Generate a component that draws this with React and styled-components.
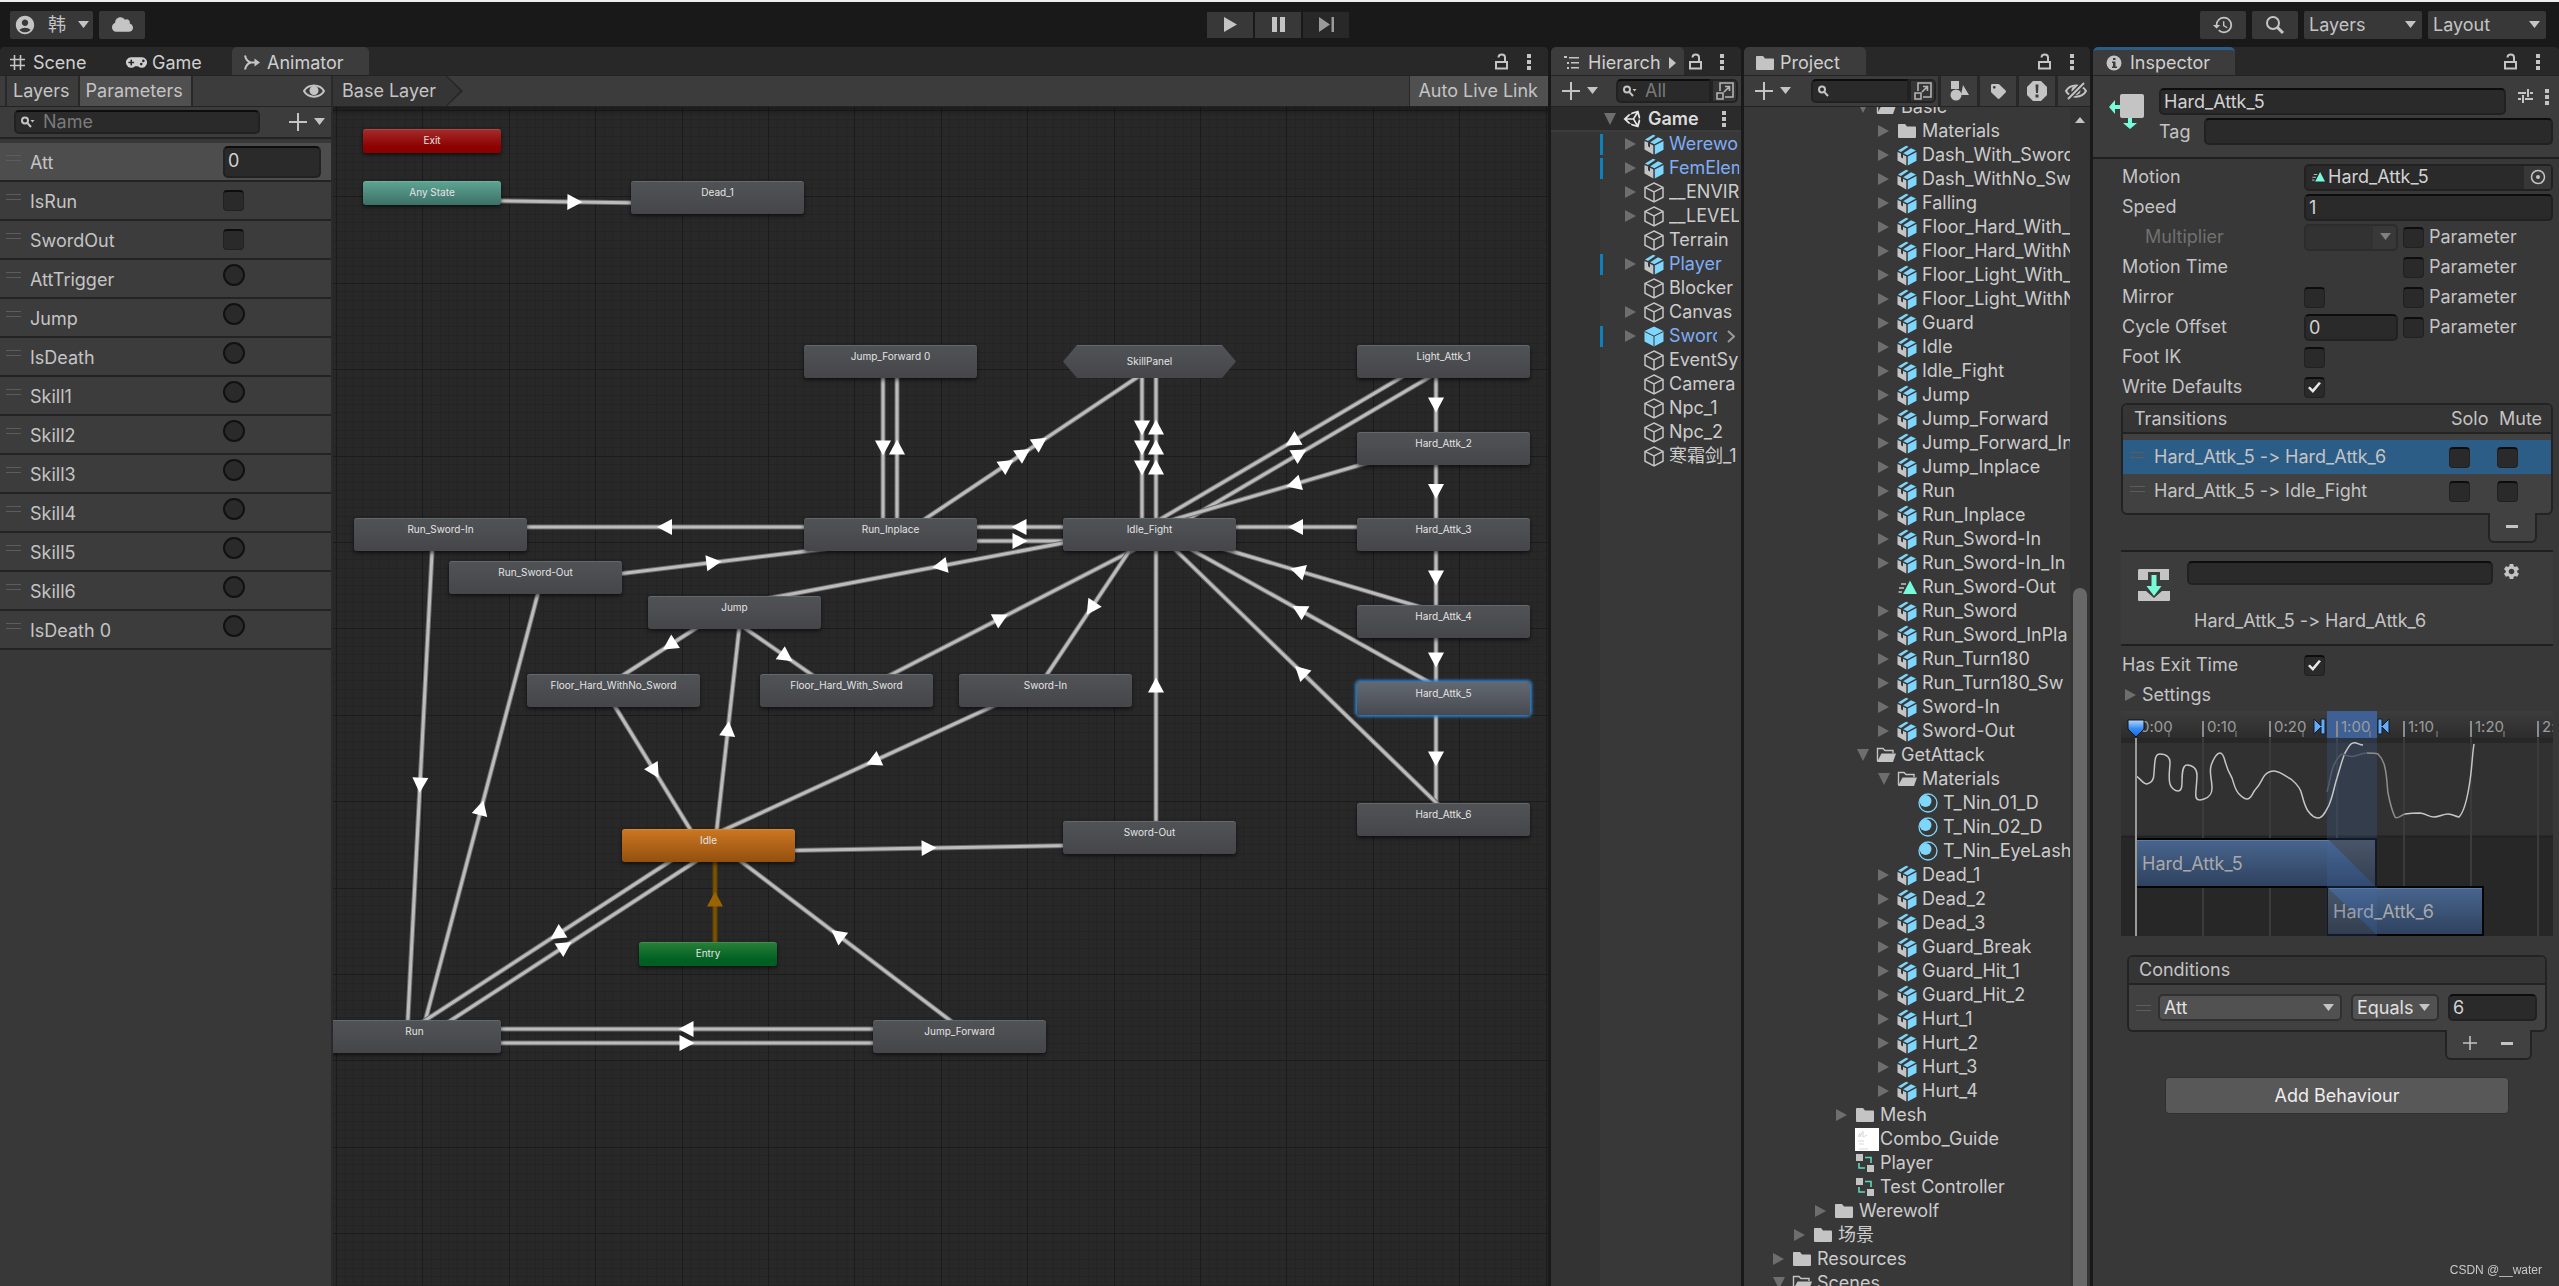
import React from 'react';
import styled, { createGlobalStyle, css } from 'styled-components';
import { FaCloud, FaGamepad, FaTag, FaUnity } from 'react-icons/fa';
import { MdAccountCircle, MdHistory, MdSettings } from 'react-icons/md';

const GlobalStyle = createGlobalStyle`
  * {
    box-sizing: border-box;
  }
  body {
    margin: 0;
    background: #191919;
    overflow: hidden;
  }
  body, button, input, select, table {
    font-family: Inter, 'Noto Sans CJK SC', sans-serif;
    font-size: 18px;
    font-feature-settings: 'calt' 0;
    line-height: 24px;
    color: #c4c4c4;
  }
  button {
    padding: 0;
    border: 0;
    background: none;
  }
  svg {
    display: block;
    flex: none;
  }
`;

/* ---------- layout ---------- */

const Editor = styled.div`
  display: flex;
  flex-direction: column;
  height: 100vh;
  border-top: 2px solid #eceff1;
`;

const TopBar = styled.header`
  display: grid;
  grid-template-columns: 1fr auto 1fr;
  align-items: center;
  height: 45px;
  padding: 0 13px 0 10px;
`;

const TopGroup = styled.div`
  display: flex;
  gap: 6px;
  justify-content: ${(p) => (p.$end ? 'flex-end' : 'flex-start')};
`;

const PlayGroup = styled.div`
  display: flex;
  gap: 2px;
`;

const TopButton = styled.button`
  display: flex;
  align-items: center;
  justify-content: center;
  gap: 12px;
  width: ${(p) => p.$w || 46}px;
  height: 28px;
  border-radius: 2px;
  background: #383838;
`;

const PlayButton = styled(TopButton)`
  height: 26px;
  border-radius: 0;
  ${(p) => p.disabled && 'background: #282828; color: #9a9a9a;'}
`;

const Workspace = styled.main`
  flex: 1;
  min-height: 0;
  display: grid;
  grid-template-columns: minmax(0, 1fr) 190px 346px 466px;
  gap: 3px;
`;

const Panel = styled.section`
  display: flex;
  flex-direction: column;
  min-width: 0;
  min-height: 0;
  overflow: hidden;
  border-radius: 5px 5px 0 0;
  background: #383838;
`;

const TabStrip = styled.div`
  display: flex;
  flex: none;
  height: 29px;
  background: #282828;
  border-bottom: 1px solid #232323;
`;

const Tab = styled.button`
  display: flex;
  align-items: center;
  gap: ${(p) => p.$gap || 7}px;
  width: ${(p) => p.$w}px;
  padding: 3px 0 0 ${(p) => p.$pad}px;
  overflow: hidden;
  white-space: nowrap;
  border-radius: 5px 5px 0 0;
  color: #cfcfcf;
  ${(p) => p.$active && 'background: #3c3c3c;'}
  ${(p) => p.$focus && 'border-top: 3px solid #2c5d87; padding-top: 0;'}
`;

const TabName = styled.span`
  width: ${(p) => (p.$clip ? '73px' : 'auto')};
  overflow: hidden;
`;

const TabTools = styled.div`
  display: flex;
  align-items: center;
  gap: ${(p) => p.$gap || 19}px;
  margin-left: auto;
  padding-right: ${(p) => p.$end}px;
`;

const Toolbar = styled.div`
  display: flex;
  flex: none;
  align-items: center;
  height: 31px;
  background: #3c3c3c;
  border-bottom: 1px solid #232323;
`;

/* ---------- controls ---------- */

const field = css`
  background: #2a2a2a;
  border: 2px solid #212121;
  border-top-color: #0d0d0d;
  border-radius: 5px;
`;

const TextInput = styled.input`
  ${field}
  width: 100%;
  flex: 1;
  min-width: 0;
  height: ${(p) => p.$h || 27}px;
  padding: 0 3px;
  color: #d2d2d2;
  outline: none;
`;

const CheckBox = styled.input.attrs({ type: 'checkbox' })`
  appearance: none;
  display: grid;
  place-items: center;
  flex: none;
  width: 21px;
  height: 21px;
  margin: 0;
  background: #2a2a2a;
  border: 1px solid #212121;
  border-top: 2px solid #0d0d0d;
  border-radius: 4px;
  &:checked::before {
    content: '';
    width: 13px;
    height: 11px;
    background: #e8e8e8;
    clip-path: polygon(0 55%, 14% 42%, 36% 66%, 84% 0, 100% 12%, 38% 100%);
  }
`;

const Trigger = styled.input.attrs({ type: 'radio' })`
  appearance: none;
  width: 22px;
  height: 22px;
  margin: 0;
  background: #2a2a2a;
  border: 2px solid #111;
  border-radius: 50%;
`;

const SelectWrap = styled.span`
  display: grid;
  align-items: center;
  flex: none;
  width: ${(p) => p.$w}px;
  svg {
    grid-area: 1 / 1;
    justify-self: end;
    margin-right: ${(p) => p.$arrow || 6}px;
    pointer-events: none;
  }
`;

const Select = styled.select`
  appearance: none;
  grid-area: 1 / 1;
  width: 100%;
  height: 27px;
  padding: 0 4px;
  background: #515151;
  border: 2px solid #303030;
  border-radius: 5px;
  color: #e0e0e0;
  outline: none;
  &:disabled {
    background: linear-gradient(90deg, #323232 75%, #383838 75%);
    border-color: #2c2c2c;
    opacity: 1;
  }
`;

const TopSelect = styled(Select)`
  height: 28px;
  padding: 0 5px;
  background: #383838;
  border: 0;
  border-radius: 2px;
  color: #c4c4c4;
`;

const SearchBox = styled.label`
  ${field}
  display: flex;
  align-items: center;
  flex: ${(p) => (p.$w ? 'none' : '1')};
  width: ${(p) => p.$w}px;
  min-width: 0;
  height: 24px;
  padding-left: 5px;
  gap: 8px;
  ${(p) => p.$joined && 'border-radius: 5px 0 0 5px;'}
  input {
    width: 100%;
    min-width: 0;
    padding: 0;
    border: 0;
    background: none;
    outline: none;
  }
  input::placeholder {
    color: #7a7a7a;
  }
`;

const PickerButton = styled.button`
  display: grid;
  place-items: center;
  flex: none;
  width: 27px;
  height: 24px;
  border: 2px solid #222;
  border-radius: 0 5px 5px 0;
  background: #353535;
`;

const AddButton = styled.button`
  display: flex;
  flex: none;
  align-items: center;
  gap: 7px;
`;

/* ---------- icons ---------- */

const Down = ({ color = '#c4c4c4', size = 11 }) => (
  <svg width={size} height='8' viewBox='0 0 11 8' fill={color}>
    <path d='M0 0h11L5.5 7z' />
  </svg>
);

const Lock = () => (
  <svg width='13' height='17' viewBox='0 0 13 17' fill='none' stroke='#c4c4c4' strokeWidth='2'>
    <path d='M1 9h11v6.5H1z' />
    <path d='M3.5 4.5C3.5 0.5 10 0.5 10 4.5V9' />
  </svg>
);

const Dots = () => (
  <svg width='4' height='17' viewBox='0 0 4 17' fill='#c4c4c4'>
    <path d='M0 1h4v4H0zM0 7h4v4H0zM0 13h4v4H0z' />
  </svg>
);

const Plus = ({ size = 18 }) => (
  <svg width={size} height={size} viewBox='0 0 18 18' stroke='#c4c4c4' strokeWidth='2'>
    <path d='M9 0v18M0 9h18' />
  </svg>
);

const Minus = () => (
  <svg width='12' height='3' viewBox='0 0 12 3' fill='#c4c4c4'>
    <path d='M0 0h12v3H0z' />
  </svg>
);

const Lens = ({ menu }) => (
  <svg width='14' height='12' viewBox='0 0 14 12' fill='none' stroke='#c4c4c4' strokeWidth='2'>
    <circle cx='4' cy='4.5' r='3' />
    <path d='M6.2 6.8L10 11' />
    {menu && <path d='M9.5 4h4l-2 2.4z' fill='#c4c4c4' stroke='none' />}
  </svg>
);

const BigLens = () => (
  <svg width='20' height='20' viewBox='0 0 20 20' fill='none' stroke='#c4c4c4'>
    <circle cx='8' cy='8' r='6' strokeWidth='2' />
    <path d='M12.5 12.5L18 18' strokeWidth='3' />
  </svg>
);

const Picker = () => (
  <svg width='18' height='18' viewBox='0 0 18 18' fill='none' stroke='#b4b4b4' strokeWidth='1.6'>
    <path d='M4 9V1h13v14H9' />
    <path d='M1 11h6v6H1zM8 10l5-5M9 4.5h4.5V9' />
  </svg>
);

const GridIcon = () => (
  <svg width='17' height='17' viewBox='0 0 17 17' stroke='#c4c4c4' strokeWidth='1.6'>
    <path d='M5.5 1v15M11.5 1v15M1 5.5h15M1 11.5h15' />
  </svg>
);

const AnimatorIcon = () => (
  <svg width='16' height='17' viewBox='0 0 16 17' fill='none' stroke='#c4c4c4' strokeWidth='2'>
    <path d='M1 1.500c1 4.500 3 6.500 6 7h4M1 15.500c1-4 3-6.500 6-7' />
    <path d='M10.500 4.500l5.500 4-5.500 4z' fill='#c4c4c4' stroke='none' />
  </svg>
);

const HierarchyIcon = () => (
  <svg width='16' height='14' viewBox='0 0 16 14' fill='#c4c4c4'>
    <path d='M0 0h3v2H0zM5 1h10v1.600H5zM3 6h2v2H3zM7 6h8v1.600H7zM3 11h2v2H3zM7 11h8v1.600H7z' />
  </svg>
);

const Folder = () => (
  <svg width='20' height='16' viewBox='0 0 20 16' fill='#c4c4c4'>
    <path d='M1 1.500Q1 1 2 1h6l2 2.500h8q1 0 1 1V14q0 1-1 1H2q-1 0-1-1z' />
  </svg>
);

const FolderOpen = () => (
  <svg width='20' height='16' viewBox='0 0 20 16'>
    <path d='M1.500 14V1.500H7l2 2h8V6' fill='none' stroke='#c4c4c4' strokeWidth='1.400' />
    <path d='M5.500 6.500H20L17 15H1z' fill='#c4c4c4' />
  </svg>
);

const ModelIcon = () => (
  <svg width='20' height='21' viewBox='0 0 20 21'>
    <path d='M1 5.400L9 .8l2.600 1L4 6.900zM6.200 8.200L14 3.200l5 2.200-8.600 4.800z' fill='#7fd6fd' />
    <path d='M.5 7L4 8.600v3.600l2 1.200V9.700l3.300 1.700v9L.5 15.600z' fill='#c4c4c4' />
    <path d='M10.800 11.400L19.500 7v8.800l-8.700 4.600z' fill='#7fd6fd' />
  </svg>
);

const CubeIcon = () => (
  <svg width='20' height='21' viewBox='0 0 20 21' fill='none' stroke='#c4c4c4' strokeWidth='1.500'>
    <path d='M10 1l9 4.400v9.800L10 20l-9-4.800V5.400zM1 5.400l9 4.600 9-4.600M10 10v10' />
  </svg>
);

const PrefabIcon = () => (
  <svg width='20' height='21' viewBox='0 0 20 21'>
    <path d='M10 .5l9.500 4.600v10.400L10 20.500.5 15.500V5.100z' fill='#7fd6fd' />
    <path d='M.5 5.400l9.500 4.800 9.500-4.800M10 10.200v10.300' fill='none' stroke='#383838' />
  </svg>
);

const ClipIcon = ({ size = 20 }) => (
  <svg width={size} height={size * 0.8} viewBox='0 0 20 16'>
    <path d='M13 1.500L20 15H6z' fill='#77fbd9' />
    <path d='M4 5h5M2 9h5M1.500 13H5' stroke='#c4c4c4' strokeWidth='1.300' />
  </svg>
);

const MaterialIcon = () => (
  <svg width='20' height='20' viewBox='0 0 20 20'>
    <circle cx='10' cy='10' r='9' fill='none' stroke='#7fd6fd' strokeWidth='1.300' />
    <circle cx='7.500' cy='8' r='6' fill='#7fd6fd' />
  </svg>
);

const TextureIcon = () => (
  <svg width='24' height='23' viewBox='0 0 24 23'>
    <path d='M0 0h24v23H0z' fill='#fff' />
    <path d='M3 9l2-4v4l3-6v6l4-2M3 13h6M4 16h5M4 21h9' fill='none' stroke='#d5d8da' />
  </svg>
);

const ControllerIcon = () => (
  <svg width='20' height='18' viewBox='0 0 20 18'>
    <path d='M1 0h7v7H1zM12 11h7v7h-7z' fill='#c4c4c4' />
    <path d='M10 3.500h6V9M4 9v5h6' fill='none' stroke='#5ed8bb' strokeWidth='1.600' />
  </svg>
);

const EyeIcon = ({ off }) => (
  <svg width='22' height='18' viewBox='0 0 22 18' fill='none' stroke='#c4c4c4' strokeWidth='2'>
    <path d='M1 9C5 1.500 17 1.500 21 9 17 16.500 5 16.500 1 9z' />
    <circle cx='11' cy='8.500' r='4.500' fill='#c4c4c4' stroke='none' />
    {off && <path d='M3 17L19 1' stroke='#3c3c3c' strokeWidth='5' />}
    {off && <path d='M3 17L19 1' />}
  </svg>
);

const InfoIcon = () => (
  <svg width='16' height='16' viewBox='0 0 16 16'>
    <circle cx='8' cy='8' r='7.500' fill='#c4c4c4' />
    <path d='M7 3h2.500v2H7zM6 6.500h3.500v5H11V13H6v-1.500h1V8H6z' fill='#3c3c3c' />
  </svg>
);

const ShapesIcon = () => (
  <svg width='20' height='20' viewBox='0 0 20 20' fill='#c4c4c4'>
    <path d='M2 0h8v8H2zM14 4l6 10h-8z' />
    <circle cx='7' cy='14' r='5.500' />
  </svg>
);

const AlertIcon = () => (
  <svg width='20' height='20' viewBox='0 0 20 20'>
    <path d='M6 0h8l6 6v8l-6 6H6l-6-6V6z' fill='#c4c4c4' />
    <path d='M8.500 3.500h3L11 12H9zM8.500 13.500h3v3h-3z' fill='#3c3c3c' />
  </svg>
);

const PresetIcon = () => (
  <svg width='15' height='16' viewBox='0 0 15 16' stroke='#c4c4c4' strokeWidth='2'>
    <path d='M0 5h8M12 5h3M10 1v8M0 11h3M7 11h8M5 7v8' />
  </svg>
);

const StateIcon = () => (
  <svg width='36' height='36' viewBox='0 0 36 36'>
    <rect x='11' y='1' width='24' height='24' rx='2' fill='#c4c4c4' />
    <path d='M0 14l6-7v5h5v4H6v5zM19 25h4v5h5l-7 6-7-6h5z' fill='#77fbd9' />
  </svg>
);

const TransitionIcon = () => (
  <svg width='32' height='32' viewBox='0 0 32 32'>
    <path d='M1 0h30v11H22V3H10v8H0V1zM0 22h8l8 7 8-7h8v9q0 1-1 1H1q-1 0-1-1z' fill='#c4c4c4' />
    <path d='M13.500 6h5v11h5L16 27 8.500 17h5z' fill='#77fbd9' />
  </svg>
);

const TargetIcon = () => (
  <svg width='16' height='16' viewBox='0 0 16 16'>
    <circle cx='8' cy='8' r='6.500' fill='none' stroke='#c4c4c4' strokeWidth='1.500' />
    <circle cx='8' cy='8' r='2' fill='#c4c4c4' />
  </svg>
);

/* ---------- animator: parameters ---------- */

const params = [
  ['Att', 'int'],
  ['IsRun', 'bool'],
  ['SwordOut', 'bool'],
  ['AttTrigger', 'trigger'],
  ['Jump', 'trigger'],
  ['IsDeath', 'trigger'],
  ['Skill1', 'trigger'],
  ['Skill2', 'trigger'],
  ['Skill3', 'trigger'],
  ['Skill4', 'trigger'],
  ['Skill5', 'trigger'],
  ['Skill6', 'trigger'],
  ['IsDeath 0', 'trigger'],
];

const AnimatorBody = styled.div`
  display: grid;
  grid-template-columns: 333px minmax(0, 1fr);
  flex: 1;
  min-height: 0;
`;

const Side = styled.div`
  display: flex;
  flex-direction: column;
  border-right: 2px solid #2a2a2a;
`;

const ModeButton = styled.button`
  height: 30px;
  padding: 0 8px 0 6px;
  border-right: 2px solid #282828;
  ${(p) => p.$active && 'background: #505050;'}
`;

const ModeBar = styled(Toolbar)`
  padding: 0 6px 0 5px;
  > svg {
    margin-left: auto;
  }
  ${ModeButton}:first-child {
    border-left: 2px solid #282828;
  }
`;

const SearchRow = styled.div`
  display: flex;
  align-items: center;
  gap: 29px;
  height: 32px;
  padding: 0 6px 0 14px;
  background: #3c3c3c;
  border-bottom: 2px solid #232323;
`;

const ParamList = styled.ul`
  margin: 0;
  padding: 4px 0 0;
  list-style: none;
  background: #383838;
`;

const ParamRow = styled.li`
  display: grid;
  grid-template-columns: 24px 193px 98px;
  height: 39px;
  padding: 0 6px;
  border-bottom: 2px solid #232323;
  background: ${(p) => (p.$active ? '#4d4d4d' : '#3c3c3c')};
  label {
    padding-top: 8px;
  }
`;

const ParamValue = styled.div`
  padding-top: ${(p) => (p.$kind === 'int' ? 3 : p.$kind === 'bool' ? 8 : 4)}px;
  input {
    display: block;
  }
`;

const ParamInput = styled(TextInput)`
  height: 32px;
  padding-bottom: 4px;
`;

const Handle = styled.span`
  width: 15px;
  height: 6px;
  margin-top: ${(p) => p.$top || 0}px;
  border: solid #5c5c5c;
  border-width: 1px 0;
`;

/* ---------- animator: graph ---------- */

// Node origin is the top left corner of the graph view.
const nodes = {
  exit: { label: 'Exit', x: 30, y: 22, kind: 'exit' },
  any: { label: 'Any State', x: 30, y: 74, kind: 'any' },
  dead: { label: 'Dead_1', x: 298, y: 74 },
  jumpFwd0: { label: 'Jump_Forward 0', x: 471, y: 238 },
  skill: { label: 'SkillPanel', x: 730, y: 238, kind: 'machine' },
  light1: { label: 'Light_Attk_1', x: 1024, y: 238 },
  hard2: { label: 'Hard_Attk_2', x: 1024, y: 325 },
  hard3: { label: 'Hard_Attk_3', x: 1024, y: 411 },
  hard4: { label: 'Hard_Attk_4', x: 1024, y: 498 },
  hard5: { label: 'Hard_Attk_5', x: 1024, y: 575, kind: 'selected' },
  hard6: { label: 'Hard_Attk_6', x: 1024, y: 696 },
  runIn: { label: 'Run_Sword-In', x: 21, y: 411 },
  runOut: { label: 'Run_Sword-Out', x: 116, y: 454 },
  runPlace: { label: 'Run_Inplace', x: 471, y: 411 },
  fight: { label: 'Idle_Fight', x: 730, y: 411 },
  jump: { label: 'Jump', x: 315, y: 489 },
  floorNo: { label: 'Floor_Hard_WithNo_Sword', x: 194, y: 567 },
  floorWith: { label: 'Floor_Hard_With_Sword', x: 427, y: 567 },
  swordIn: { label: 'Sword-In', x: 626, y: 567 },
  swordOut: { label: 'Sword-Out', x: 730, y: 714 },
  idle: { label: 'Idle', x: 289, y: 722, kind: 'idle' },
  entry: { label: 'Entry', x: 306, y: 835, kind: 'entry' },
  run: { label: 'Run', x: -5, y: 913 },
  jumpFwd: { label: 'Jump_Forward', x: 540, y: 913 },
};

const edges = [
  ['any', 'dead'],
  ['jumpFwd0', 'runPlace'],
  ['runPlace', 'jumpFwd0'],
  ['runPlace', 'skill', 3],
  ['skill', 'fight', 3],
  ['fight', 'skill', 3],
  ['light1', 'fight'],
  ['fight', 'light1'],
  ['light1', 'hard2'],
  ['hard2', 'hard3'],
  ['hard3', 'hard4'],
  ['hard4', 'hard5'],
  ['hard5', 'hard6'],
  ['hard2', 'fight'],
  ['hard3', 'fight'],
  ['hard4', 'fight'],
  ['hard5', 'fight'],
  ['hard6', 'fight'],
  ['fight', 'runPlace'],
  ['runPlace', 'fight'],
  ['runPlace', 'runIn'],
  ['runOut', 'runPlace'],
  ['runIn', 'run'],
  ['run', 'runOut'],
  ['fight', 'jump'],
  ['jump', 'floorNo'],
  ['jump', 'floorWith'],
  ['floorWith', 'fight'],
  ['fight', 'swordIn'],
  ['swordIn', 'idle'],
  ['swordOut', 'fight'],
  ['floorNo', 'idle'],
  ['idle', 'jump'],
  ['idle', 'swordOut'],
  ['idle', 'run'],
  ['run', 'idle'],
  ['run', 'jumpFwd'],
  ['jumpFwd', 'run'],
  ['jumpFwd', 'idle'],
  ['entry', 'idle'],
];

const small = ['exit', 'any', 'entry'];
const center = (n) => {
  const isSmall = small.includes(n.kind);
  return [n.x + (isSmall ? 69 : 86), n.y + (isSmall ? 12 : 16)];
};

const fills = {
  exit: 'linear-gradient(#a52c2c, #8c0000 75%)',
  any: 'linear-gradient(#5ea593, #3c7067)',
  idle: 'linear-gradient(#cc7722, #94500e)',
  entry: 'linear-gradient(#298038, #005f22 75%)',
  selected: 'linear-gradient(#636872, #484a50)',
};

const Graph = styled.div`
  position: relative;
  flex: 1;
  overflow: hidden;
  background: #282828;
  > svg {
    position: absolute;
    inset: 0;
  }
`;

const Node = styled.div`
  position: absolute;
  left: ${(p) => p.$x}px;
  top: ${(p) => p.$y}px;
  width: ${(p) => (small.includes(p.$kind) ? 138 : 173)}px;
  height: ${(p) => (small.includes(p.$kind) ? 24 : 33)}px;
  border-radius: 3px;
  background: ${(p) => fills[p.$kind] || 'linear-gradient(#505356, #46464a)'};
  box-shadow: ${(p) =>
    p.$kind === 'selected'
      ? '0 0 3px 2px #2f7fc8'
      : '0 2px 4px rgba(0, 0, 0, 0.6), inset 0 1px rgba(255, 255, 255, 0.12)'};
  text-align: center;
  font-size: 10px;
  line-height: ${(p) => (p.$kind === 'machine' ? 33 : 23)}px;
  color: #e4e4e4;
  ${(p) =>
    p.$kind === 'machine' &&
    'clip-path: polygon(14px 0, calc(100% - 14px) 0, 100% 50%, calc(100% - 14px) 100%, 14px 100%, 0 50%);'}
`;

const GraphSide = styled.div`
  display: flex;
  flex-direction: column;
  min-width: 0;
`;

const Crumb = styled.button`
  display: flex;
  align-items: center;
  height: 30px;
  padding-left: 9px;
  background: #353535;
  clip-path: polygon(0 0, calc(100% - 16px) 0, 100% 50%, calc(100% - 16px) 100%, 0 100%);
  span {
    padding-right: 10px;
  }
`;

const LiveLink = styled.button`
  height: 30px;
  margin-left: auto;
  padding: 0 10px 0 8px;
  border-left: 1px solid #282828;
  background: #505050;
`;

const TILE = 432;

function GraphGrid() {
  const path = (count) => {
    let d = '';
    for (let i = 0; i < count; i++) {
      const at = Math.round((i * TILE) / count);
      d += `M${at} 0h1v${TILE}h-1zM0 ${at}h${TILE}v1H0z`;
    }
    return d;
  };
  return (
    <pattern id='grid' x='3' y='3' width={TILE} height={TILE} patternUnits='userSpaceOnUse'>
      <path d={path(50)} fill='#242424' />
      <path d={path(5)} fill='#1b1b1b' />
    </pattern>
  );
}

function Edge({ from, to, arrows = 1 }) {
  const [ax, ay] = center(nodes[from]);
  const [bx, by] = center(nodes[to]);
  const len = Math.hypot(bx - ax, by - ay);
  const dx = (bx - ax) / len;
  const dy = (by - ay) / len;
  // each direction runs on its own side of the centre line
  const ox = -dy * 7;
  const oy = dx * 7;
  const angle = (Math.atan2(dy, dx) * 180) / Math.PI;
  const entry = from === 'entry';
  const steps = arrows === 3 ? [-20, 0, 20] : [0];
  const d = `M${ax + ox} ${ay + oy}L${bx + ox} ${by + oy}`;
  return (
    <g>
      <path d={d} stroke={entry ? '#5e4208' : '#6c6c6c'} strokeWidth='5' />
      <path d={d} stroke={entry ? '#7a5200' : '#bcbcbc'} strokeWidth='3' />
      {steps.map((s) => (
        <path
          key={s}
          d='M-7 -8L8 0L-7 8z'
          fill={entry ? '#996300' : '#fff'}
          transform={`translate(${(ax + bx) / 2 + ox + dx * s} ${(ay + by) / 2 + oy + dy * s}) rotate(${angle})`}
        />
      ))}
    </g>
  );
}

function Animator() {
  return (
    <Panel>
      <TabStrip>
        <Tab $w={117} $pad={9}>
          <GridIcon />
          Scene
        </Tab>
        <Tab $w={115} $pad={9} $gap={5}>
          <FaGamepad size={21} />
          Game
        </Tab>
        <Tab $w={137} $pad={12} $active>
          <AnimatorIcon />
          Animator
        </Tab>
        <TabTools $end={17}>
          <Lock />
          <Dots />
        </TabTools>
      </TabStrip>
      <AnimatorBody>
        <Side>
          <ModeBar>
            <ModeButton>Layers</ModeButton>
            <ModeButton $active>Parameters</ModeButton>
            <EyeIcon />
          </ModeBar>
          <SearchRow>
            <SearchBox>
              <Lens menu />
              <input aria-label='Name' placeholder='Name' />
            </SearchBox>
            <AddButton aria-label='Add parameter'>
              <Plus />
              <Down />
            </AddButton>
          </SearchRow>
          <ParamList>
            {params.map(([name, kind], i) => (
              <ParamRow key={name} $active={i === 0}>
                <Handle $top={12} />
                <label htmlFor={`param-${i}`}>{name}</label>
                <ParamValue $kind={kind}>
                  {kind === 'int' && <ParamInput id={`param-${i}`} defaultValue='0' />}
                  {kind === 'bool' && <CheckBox id={`param-${i}`} />}
                  {kind === 'trigger' && <Trigger id={`param-${i}`} />}
                </ParamValue>
              </ParamRow>
            ))}
          </ParamList>
        </Side>
        <GraphSide>
          <Toolbar>
            <Crumb>
              <span>Base Layer</span>
              <svg width='17' height='30' viewBox='0 0 17 30' fill='none' stroke='#262626' strokeWidth='2'>
                <path d='M0 -1L16 15L0 31' />
              </svg>
            </Crumb>
            <LiveLink>Auto Live Link</LiveLink>
          </Toolbar>
          <Graph>
            <svg width='100%' height='100%'>
              <defs>
                <GraphGrid />
                <linearGradient id='top-shade' x2='0' y2='1'>
                  <stop stopColor='#000' stopOpacity='.3' />
                  <stop offset='1' stopColor='#000' stopOpacity='0' />
                </linearGradient>
              </defs>
              <rect width='100%' height='100%' fill='url(#grid)' />
              <rect width='100%' height='9' fill='url(#top-shade)' />
              {edges.map(([from, to, arrows]) => (
                <Edge key={from + to} from={from} to={to} arrows={arrows} />
              ))}
            </svg>
            {Object.entries(nodes).map(([id, n]) => (
              <Node key={id} $x={n.x} $y={n.y} $kind={n.kind}>
                {n.label}
              </Node>
            ))}
          </Graph>
        </GraphSide>
      </AnimatorBody>
    </Panel>
  );
}

/* ---------- trees ---------- */

const icons = {
  model: <ModelIcon />,
  cube: <CubeIcon />,
  prefab: <PrefabIcon />,
  folder: <Folder />,
  open: <FolderOpen />,
  clip: <ClipIcon />,
  material: <MaterialIcon />,
  texture: <TextureIcon />,
  controller: <ControllerIcon />,
  scene: <FaUnity size={20} color='#e6e6e6' />,
};

const TreeList = styled.ul`
  flex: 1;
  min-width: 0;
  margin: 0;
  padding: 0;
  list-style: none;
`;

const TreeItem = styled.li`
  display: flex;
  align-items: center;
  height: 24px;
  padding-left: ${(p) => p.$indent}px;
  white-space: nowrap;
  color: ${(p) => (p.$blue ? '#7fadf5' : '#cccccc')};
`;

const Fold = styled.span`
  display: grid;
  place-items: center;
  flex: none;
  width: 12px;
  margin-right: 7px;
`;

const TreeIcon = styled.span`
  display: grid;
  place-items: center;
  flex: none;
  width: 20px;
  margin-right: 5px;
`;

const TreeName = styled.span`
  flex: 1;
  min-width: 0;
  overflow: hidden;
`;

function FoldArrow({ state }) {
  if (!state) return <Fold />;
  return (
    <Fold>
      <svg width='12' height='14' viewBox='0 0 12 14' fill='#6e6e6e'>
        <path d={state === 'open' ? 'M0 1h12L6 13z' : 'M0 1v12l11-6z'} />
      </svg>
    </Fold>
  );
}

const hierarchy = [
  ['Werewo', 'model', true],
  ['FemElem', 'model', true],
  ['__ENVIR', 'cube', true],
  ['__LEVEL', 'cube', true],
  ['Terrain', 'cube'],
  ['Player', 'model', true],
  ['Blocker', 'cube'],
  ['Canvas', 'cube', true],
  ['Sword', 'prefab', true],
  ['EventSy', 'cube'],
  ['Camera', 'cube'],
  ['Npc_1', 'cube'],
  ['Npc_2', 'cube'],
  ['寒霜剑_1', 'cube'],
];

const HierarchyBody = styled.div`
  flex: 1;
  overflow: hidden;
  background: linear-gradient(90deg, #333 49px, #383838 49px);
`;

const SceneRow = styled.div`
  display: flex;
  align-items: center;
  height: 25px;
  padding: 0 15px 0 53px;
  background: #2b2b2b;
  border-bottom: 2px solid #3c3c3c;
  font-weight: 600;
  color: #dcdcdc;
`;

const HierarchyItem = styled(TreeItem)`
  padding: 0 2px 0 25px;
  margin-left: 49px;
  position: relative;
  ${(p) =>
    p.$blue &&
    `&::before {
      content: '';
      position: absolute;
      left: 0;
      top: 2px;
      width: 3px;
      height: 21px;
      background: #0f80be;
    }`}
`;

const OpenPrefab = styled.button`
  padding: 0 4px 0 10px;
`;

const SplitToolbar = styled(Toolbar)`
  padding-left: 11px;
  ${AddButton} {
    margin-right: ${(p) => p.$gap}px;
  }
`;

function Hierarchy() {
  return (
    <Panel>
      <TabStrip>
        <Tab $w={133} $pad={13} $gap={8} $active>
          <HierarchyIcon />
          <TabName $clip>Hierarchy</TabName>
          <svg width='7' height='12' viewBox='0 0 7 12' fill='#c4c4c4'>
            <path d='M0 0v12l7-6z' />
          </svg>
        </Tab>
        <TabTools $end={17} $gap={18}>
          <Lock />
          <Dots />
        </TabTools>
      </TabStrip>
      <SplitToolbar $gap={18}>
        <AddButton aria-label='Create'>
          <Plus />
          <Down />
        </AddButton>
        <SearchBox $w={95} $joined>
          <Lens menu />
          <input aria-label='Search hierarchy' placeholder='All' />
        </SearchBox>
        <PickerButton aria-label='Search window'>
          <Picker />
        </PickerButton>
      </SplitToolbar>
      <HierarchyBody>
        <SceneRow>
          <FoldArrow state='open' />
          <TreeIcon>{icons.scene}</TreeIcon>
          <TreeName>Game</TreeName>
          <Dots />
        </SceneRow>
        <TreeList>
          {hierarchy.map(([name, icon, fold]) => (
            <HierarchyItem key={name} $blue={icon !== 'cube'}>
              <FoldArrow state={fold && 'closed'} />
              <TreeIcon>{icons[icon]}</TreeIcon>
              <TreeName>{name}</TreeName>
              {icon === 'prefab' && (
                <OpenPrefab aria-label='Open prefab'>
                  <svg width='8' height='13' viewBox='0 0 8 13' fill='none' stroke='#9a9a9a' strokeWidth='2'>
                    <path d='M1 1l6 5.500L1 12' />
                  </svg>
                </OpenPrefab>
              )}
            </HierarchyItem>
          ))}
        </TreeList>
      </HierarchyBody>
    </Panel>
  );
}

const models = (depth, names) => names.map((name) => [depth, name, 'model', 'closed']);

const assets = [
  [4, 'Basic', 'open', 'open'],
  [5, 'Materials', 'folder', 'closed'],
  ...models(5, [
    'Dash_With_Sword',
    'Dash_WithNo_Sw',
    'Falling',
    'Floor_Hard_With_',
    'Floor_Hard_WithN',
    'Floor_Light_With_',
    'Floor_Light_WithN',
    'Guard',
    'Idle',
    'Idle_Fight',
    'Jump',
    'Jump_Forward',
    'Jump_Forward_In',
    'Jump_Inplace',
    'Run',
    'Run_Inplace',
    'Run_Sword-In',
    'Run_Sword-In_In',
  ]),
  [5, 'Run_Sword-Out', 'clip'],
  ...models(5, [
    'Run_Sword',
    'Run_Sword_InPla',
    'Run_Turn180',
    'Run_Turn180_Sw',
    'Sword-In',
    'Sword-Out',
  ]),
  [4, 'GetAttack', 'open', 'open'],
  [5, 'Materials', 'open', 'open'],
  [6, 'T_Nin_01_D', 'material'],
  [6, 'T_Nin_02_D', 'material'],
  [6, 'T_Nin_EyeLash', 'material'],
  ...models(5, [
    'Dead_1',
    'Dead_2',
    'Dead_3',
    'Guard_Break',
    'Guard_Hit_1',
    'Guard_Hit_2',
    'Hurt_1',
    'Hurt_2',
    'Hurt_3',
    'Hurt_4',
  ]),
  [3, 'Mesh', 'folder', 'closed'],
  [3, 'Combo_Guide', 'texture'],
  [3, 'Player', 'controller'],
  [3, 'Test Controller', 'controller'],
  [2, 'Werewolf', 'folder', 'closed'],
  [1, '场景', 'folder', 'closed'],
  [0, 'Resources', 'folder', 'closed'],
  [0, 'Scenes', 'open', 'open'],
];

const ProjectBody = styled.div`
  display: flex;
  flex: 1;
  min-height: 0;
  overflow: hidden;
`;

const AssetList = styled(TreeList)`
  margin-top: -12px;
`;

const ScrollBar = styled.div`
  display: flex;
  flex-direction: column;
  align-items: center;
  width: 20px;
  padding-top: 10px;
  background: #343434;
`;

const Thumb = styled.div`
  flex: 1;
  width: 14px;
  margin-top: 465px;
  border-radius: 7px 7px 0 0;
  background: #686868;
`;

const FilterButton = styled.button`
  display: grid;
  place-items: center;
  flex: none;
  width: 39px;
  height: 30px;
  border-left: 3px solid #282828;
  ${PickerButton} + & {
    margin-left: 2px;
  }
`;

function Project() {
  return (
    <Panel>
      <TabStrip>
        <Tab $w={122} $pad={11} $gap={5} $active>
          <Folder />
          Project
        </Tab>
        <TabTools $end={16}>
          <Lock />
          <Dots />
        </TabTools>
      </TabStrip>
      <SplitToolbar $gap={20}>
        <AddButton aria-label='Create asset'>
          <Plus />
          <Down />
        </AddButton>
        <SearchBox $w={98} $joined>
          <Lens />
          <input aria-label='Search assets' />
        </SearchBox>
        <PickerButton aria-label='Search window'>
          <Picker />
        </PickerButton>
        <FilterButton aria-label='Filter by type'>
          <ShapesIcon />
        </FilterButton>
        <FilterButton aria-label='Filter by label'>
          <FaTag size={15} />
        </FilterButton>
        <FilterButton aria-label='Filter by import log'>
          <AlertIcon />
        </FilterButton>
        <FilterButton aria-label='Hidden packages'>
          <EyeIcon off />
        </FilterButton>
      </SplitToolbar>
      <ProjectBody>
        <AssetList>
          {assets.map(([depth, name, icon, fold], i) => (
            <TreeItem key={i} $indent={29 + depth * 21}>
              <FoldArrow state={fold} />
              <TreeIcon>{icons[icon]}</TreeIcon>
              <TreeName>{name}</TreeName>
            </TreeItem>
          ))}
        </AssetList>
        <ScrollBar>
          <svg width='10' height='6' viewBox='0 0 10 6' fill='#c4c4c4'>
            <path d='M5 0l5 6H0z' />
          </svg>
          <Thumb />
        </ScrollBar>
      </ProjectBody>
    </Panel>
  );
}

/* ---------- inspector ---------- */

const StateHeader = styled.div`
  display: grid;
  grid-template-columns: 36px minmax(0, 1fr);
  gap: 14px;
  padding: 12px 6px 12px 16px;
  background: #3c3c3c;
  border-bottom: 2px solid #1f1f1f;
  > svg {
    margin-top: 5px;
  }
`;

const HeaderLine = styled.div`
  display: flex;
  align-items: flex-start;
  gap: 12px;
  padding-right: 4px;
  & + & {
    align-items: center;
    gap: 14px;
    margin-top: 3px;
    padding-right: 0;
  }
`;

const InspectorBody = styled.div`
  padding: 3px 6px 0 28px;
`;

const PropRow = styled.div`
  display: grid;
  grid-template-columns: 183px minmax(0, 1fr);
  align-items: center;
  height: 30px;
  > :first-child {
    padding-left: ${(p) => (p.$sub ? 24 : 1)}px;
    ${(p) => p.$sub && 'color: #707070;'}
  }
`;

const PropValue = styled.div`
  display: grid;
  grid-template-columns: 94px 21px auto;
  align-items: center;
  column-gap: 5px;
`;

const ObjectField = styled.div`
  display: flex;
  align-items: center;
  gap: 3px;
  height: 27px;
  padding-left: 5px;
  border: 2px solid #212121;
  border-radius: 5px;
  background: #2a2a2a;
  color: #d2d2d2;
  button {
    display: grid;
    place-items: center;
    width: 27px;
    height: 23px;
    margin-left: auto;
    background: #373737;
  }
`;

const ListBox = styled.table`
  display: block;
  height: 112px;
  margin-top: 1px;
  border: 2px solid #232323;
  border-radius: 6px;
  background: #414141;
  thead,
  tbody {
    display: block;
  }
  thead {
    margin-bottom: 6px;
    background: #353535;
    border-bottom: 2px solid #232323;
    border-radius: 5px 5px 0 0;
  }
  tr {
    display: grid;
    grid-template-columns: minmax(0, 1fr) 48px 54px;
    align-items: center;
    height: 34px;
  }
  thead tr {
    height: 27px;
  }
  th,
  td {
    display: flex;
    padding: 0;
    font-weight: 400;
    text-align: left;
  }
  th {
    padding-left: 2px;
  }
  th:first-child {
    padding-left: 11px;
  }
`;

const TransitionRow = styled.tr`
  background: ${(p) => (p.$active ? '#2c5d87' : 'transparent')};
  td:first-child {
    padding-left: 7px;
    gap: 9px;
  }
`;

const ListFooter = styled.div`
  display: flex;
  align-items: center;
  justify-content: center;
  gap: 24px;
  width: ${(p) => p.$w}px;
  height: 30px;
  margin: -2px ${(p) => p.$right}px 0 auto;
  padding: 0 2px 2px 0;
  border: 2px solid #232323;
  border-top: 0;
  border-radius: 0 0 6px 6px;
  background: #414141;
`;

const TransitionHeader = styled.div`
  display: grid;
  grid-template-columns: 40px minmax(0, 1fr) 19px;
  grid-template-rows: 48px auto;
  align-items: start;
  column-gap: 9px;
  height: 96px;
  margin-top: 7px;
  padding: 9px 32px 0 17px;
  border: solid #1f1f1f;
  border-width: 2px 0;
  background: #3c3c3c;
  > svg {
    margin-top: 8px;
  }
  > button {
    height: 20px;
    display: grid;
    place-items: center;
  }
  p {
    grid-column: 2;
    margin: 0;
    padding-left: 7px;
  }
`;

const TransitionProps = styled.div`
  padding: 4px 0 1px;
`;

const FoldButton = styled.button`
  display: flex;
  align-items: center;
  gap: 5px;
  height: 30px;
  padding-left: 4px;
  ${Fold} {
    margin: 0;
  }
`;

const Timeline = styled.svg`
  width: 100%;
  height: 225px;
  font-size: 18px;
`;

const Conditions = styled.div`
  margin: 19px 6px 0;
  border: 2px solid #232323;
  border-radius: 6px;
  background: #414141;
`;

const ConditionsTitle = styled.div`
  height: 28px;
  padding: 1px 10px;
  background: #353535;
  border-bottom: 2px solid #232323;
  border-radius: 5px 5px 0 0;
`;

const ConditionRow = styled.div`
  display: flex;
  align-items: center;
  height: 45px;
  padding: 0 8px 0 7px;
  gap: 9px;
  ${Handle} {
    margin-right: -2px;
  }
`;

const BehaviourButton = styled.button`
  display: block;
  width: 344px;
  height: 37px;
  margin: 17px auto 0;
  border: 1px solid #303030;
  border-radius: 4px;
  background: #585858;
  color: #eee;
`;

const ticks = ['0:00', '0:10', '0:20', '1:00', '1:10', '1:20', '2:00'];

function TransitionTimeline() {
  return (
    <Timeline role='img' aria-label='Transition timeline'>
      <defs>
        <linearGradient id='clip' x2='0' y2='1'>
          <stop stopColor='#48658d' />
          <stop offset='1' stopColor='#2f4260' />
        </linearGradient>
        <linearGradient id='faded' x2='0' y2='1'>
          <stop stopColor='#4b4f55' />
          <stop offset='1' stopColor='#303439' />
        </linearGradient>
        <linearGradient id='ruler' x2='0' y2='1'>
          <stop stopColor='#3d3d3d' />
          <stop offset='1' stopColor='#2c2c2c' />
        </linearGradient>
        <linearGradient id='head' x2='0' y2='1'>
          <stop stopColor='#b4d8ff' />
          <stop offset='.5' stopColor='#3b8cf2' />
          <stop offset='1' stopColor='#0b6be8' />
        </linearGradient>
      </defs>
      <rect width='100%' height='225' fill='#272727' />
      <rect width='100%' height='27' fill='url(#ruler)' />
      <rect y='27' width='100%' height='98' fill='#313131' />
      <rect y='27' width='100%' height='5' fill='#272727' />
      <path d='M0 125.500h440' stroke='#222' strokeWidth='2' />
      <rect x='206' width='50' height='27' fill='#3f6094' />
      {ticks.map((t, i) => (
        <g key={t}>
          <path d={`M${15 + i * 67} 10v16`} stroke='#8c8c8c' strokeWidth='2' />
          <path d={`M${48 + i * 67} 20v6`} stroke='#8c8c8c' />
          <path d={`M${15 + i * 67} 27v198`} stroke='#3b3b3b' strokeWidth='2' />
          <text x={19 + i * 67} y='21' fontSize='15' fill='#9c9c9c'>
            {t}
          </text>
        </g>
      ))}
      <path d='M16 127h240v50H16z' fill='#050505' />
      <path d='M16 129h238v46H16z' fill='url(#clip)' />
      <path d='M208 129h46v46z' fill='url(#faded)' />
      <path d='M16 129.500h192' stroke='#587cab' />
      <path d='M206 175h157v50H206z' fill='#050505' />
      <path d='M207 177h154v46H207z' fill='url(#clip)' />
      <path d='M207 177v46h48z' fill='url(#faded)' />
      <path d='M208 177.500h153' stroke='#587cab' />
      <text x='21' y='159' fill='#a9a9a9'>
        Hard_Attk_5
      </text>
      <text x='212' y='207' fill='#a9a9a9'>
        Hard_Attk_6
      </text>
      <rect x='206' y='27' width='50' height='198' fill='#3f6fb5' opacity='.2' />
      <g fill='none' strokeWidth='1.500'>
        <path
          d='M15 65C19 67 22 73 26 73C31 72 33 67 33 62C34 52 33 43 39 43C46 43 49 47 49 51C49 58 47 66 49 73C50 77 54 80 57 80C60 80 61 77 61 72C61 64 61 54 66 54C72 54 76 58 76 64C76 74 74 82 75 86C76 90 80 89 83 88C89 86 91 83 91 77C91 68 88 62 90 55C92 48 96 42 99 42C102 42 103 46 104 50C106 58 108 62 111 67C113 73 114 79 118 83C121 86 124 88 126 88C130 88 131 83 134 79C140 73 141 67 144 64C147 61 150 60 153 60C158 60 165 65 171 69C177 74 180 79 181 84C183 92 185 97 187 100C190 104 193 107 197 107C202 107 205 100 208 94C212 85 213 76 216 67C219 57 221 49 224 42C227 37 229 32 232 32C236 31 238 34 242 34'
          stroke='#c6c6c6'
        />
        <path d='M206 81C210 66 210 58 214 52C217 46 219 43 222 43C226 45 230 46 234 45C240 43 242 42 246 42' stroke='#535d6b' />
        <path d='M246 42C250 42 254 42 257 43C260 46 263 51 264 57C266 65 266 75 267 82C269 92 272 102 274 106C276 109 280 104 284 103' stroke='#8d8d8d' />
        <path d='M284 103C290 102 294 102 299 102C306 103 308 106 313 106C318 106 322 103 327 103C332 103 335 106 338 106C342 102 346 88 348 76C351 60 351 45 353 33' stroke='#c6c6c6' />
      </g>
      <path d='M15 27v198' stroke='#9a9a9a' strokeWidth='2' />
      <path d='M7 9h16v9l-8 8-8-8z' fill='url(#head)' stroke='#111' />
      <g fill='#64aaf8' stroke='#0c1a2c'>
        <path d='M193 8l7 7v-7h4v15h-4v-7l-7 7z' />
        <path d='M268 8l-7 7v-7h-4v15h4v-7l7 7z' />
      </g>
    </Timeline>
  );
}

const ParameterCheck = ({ id }) => (
  <>
    <CheckBox id={id} />
    <label htmlFor={id}>Parameter</label>
  </>
);

function Inspector() {
  return (
    <Panel>
      <TabStrip>
        <Tab $w={142} $pad={13} $gap={8} $active $focus>
          <InfoIcon />
          Inspector
        </Tab>
        <TabTools $end={19}>
          <Lock />
          <Dots />
        </TabTools>
      </TabStrip>
      <StateHeader>
        <StateIcon />
        <div>
          <HeaderLine>
            <TextInput aria-label='State name' defaultValue='Hard_Attk_5' />
            <PresetIcon />
            <Dots />
          </HeaderLine>
          <HeaderLine>
            <label htmlFor='tag'>Tag</label>
            <TextInput id='tag' />
          </HeaderLine>
        </div>
      </StateHeader>
      <InspectorBody>
        <PropRow>
          <span>Motion</span>
          <ObjectField>
            <ClipIcon size={14} />
            Hard_Attk_5
            <button aria-label='Pick motion'>
              <TargetIcon />
            </button>
          </ObjectField>
        </PropRow>
        <PropRow>
          <label htmlFor='speed'>Speed</label>
          <TextInput id='speed' defaultValue='1' />
        </PropRow>
        <PropRow $sub>
          <label htmlFor='multiplier'>Multiplier</label>
          <PropValue>
            <SelectWrap $w={94} $arrow={7}>
              <Select id='multiplier' disabled />
              <Down color='#808080' />
            </SelectWrap>
            <ParameterCheck id='multiplier-param' />
          </PropValue>
        </PropRow>
        <PropRow>
          <span>Motion Time</span>
          <PropValue>
            <span />
            <ParameterCheck id='time-param' />
          </PropValue>
        </PropRow>
        <PropRow>
          <label htmlFor='mirror'>Mirror</label>
          <PropValue>
            <CheckBox id='mirror' />
            <ParameterCheck id='mirror-param' />
          </PropValue>
        </PropRow>
        <PropRow>
          <label htmlFor='cycle'>Cycle Offset</label>
          <PropValue>
            <TextInput id='cycle' defaultValue='0' />
            <ParameterCheck id='cycle-param' />
          </PropValue>
        </PropRow>
        <PropRow>
          <label htmlFor='foot'>Foot IK</label>
          <CheckBox id='foot' />
        </PropRow>
        <PropRow>
          <label htmlFor='defaults'>Write Defaults</label>
          <CheckBox id='defaults' defaultChecked />
        </PropRow>
        <ListBox>
          <thead>
            <tr>
              <th>Transitions</th>
              <th>Solo</th>
              <th>Mute</th>
            </tr>
          </thead>
          <tbody>
            {['Hard_Attk_6', 'Idle_Fight'].map((to, i) => (
              <TransitionRow key={to} $active={i === 0}>
                <td>
                  <Handle $top={7} />
                  {`Hard_Attk_5 -> ${to}`}
                </td>
                <td>
                  <CheckBox aria-label={`Solo ${to}`} />
                </td>
                <td>
                  <CheckBox aria-label={`Mute ${to}`} />
                </td>
              </TransitionRow>
            ))}
          </tbody>
        </ListBox>
        <ListFooter $w={49} $right={16}>
          <button aria-label='Remove transition'>
            <Minus />
          </button>
        </ListFooter>
        <TransitionHeader>
          <TransitionIcon />
          <TextInput $h={24} aria-label='Transition name' />
          <button aria-label='Transition settings'>
            <MdSettings size={19} />
          </button>
          <p>{'Hard_Attk_5 -> Hard_Attk_6'}</p>
        </TransitionHeader>
        <TransitionProps>
          <PropRow>
            <label htmlFor='exit-time'>Has Exit Time</label>
            <CheckBox id='exit-time' defaultChecked />
          </PropRow>
          <FoldButton>
            <FoldArrow state='closed' />
            Settings
          </FoldButton>
        </TransitionProps>
        <TransitionTimeline />
        <Conditions>
          <ConditionsTitle>Conditions</ConditionsTitle>
          <ConditionRow>
            <Handle />
            <SelectWrap $w={184} $arrow={8}>
              <Select aria-label='Condition parameter'>
                <option>Att</option>
              </Select>
              <Down />
            </SelectWrap>
            <SelectWrap $w={88} $arrow={9}>
              <Select aria-label='Condition mode'>
                <option>Equals</option>
              </Select>
              <Down />
            </SelectWrap>
            <TextInput aria-label='Condition value' defaultValue='6' />
          </ConditionRow>
        </Conditions>
        <ListFooter $w={87} $right={21}>
          <button aria-label='Add condition'>
            <Plus size={14} />
          </button>
          <button aria-label='Remove condition'>
            <Minus />
          </button>
        </ListFooter>
        <BehaviourButton>Add Behaviour</BehaviourButton>
      </InspectorBody>
    </Panel>
  );
}

const Watermark = styled.div`
  position: fixed;
  right: 17px;
  bottom: 8px;
  font-family: 'Liberation Sans', sans-serif;
  font-size: 12px;
  line-height: 16px;
  color: #c9c9c9;
`;

const App = () => {
  return (
    <>
      <GlobalStyle />
      <Editor>
        <TopBar>
          <TopGroup>
            <TopButton $w={83}>
              <MdAccountCircle size={22} />
              韩
              <Down />
            </TopButton>
            <TopButton aria-label='Cloud'>
              <FaCloud size={21} />
            </TopButton>
          </TopGroup>
          <PlayGroup>
            <PlayButton aria-label='Play'>
              <svg width='13' height='15' viewBox='0 0 13 15' fill='#c4c4c4'>
                <path d='M0 0v15l13-7.500z' />
              </svg>
            </PlayButton>
            <PlayButton aria-label='Pause'>
              <svg width='13' height='15' viewBox='0 0 13 15' fill='#c4c4c4'>
                <path d='M0 0h5v15H0zM8 0h5v15H8z' />
              </svg>
            </PlayButton>
            <PlayButton aria-label='Step' disabled>
              <svg width='15' height='15' viewBox='0 0 15 15' fill='#9a9a9a'>
                <path d='M0 0v15l11-7.500zM12.500 0H15v15h-2.500z' />
              </svg>
            </PlayButton>
          </PlayGroup>
          <TopGroup $end>
            <TopButton aria-label='History'>
              <MdHistory size={22} />
            </TopButton>
            <TopButton aria-label='Search'>
              <BigLens />
            </TopButton>
            <SelectWrap $w={118}>
              <TopSelect aria-label='Layers'>
                <option>Layers</option>
              </TopSelect>
              <Down />
            </SelectWrap>
            <SelectWrap $w={118}>
              <TopSelect aria-label='Layout'>
                <option>Layout</option>
              </TopSelect>
              <Down />
            </SelectWrap>
          </TopGroup>
        </TopBar>
        <Workspace>
          <Animator />
          <Hierarchy />
          <Project />
          <Inspector />
        </Workspace>
      </Editor>
      <Watermark>CSDN @__water</Watermark>
    </>
  );
};

export default App;
